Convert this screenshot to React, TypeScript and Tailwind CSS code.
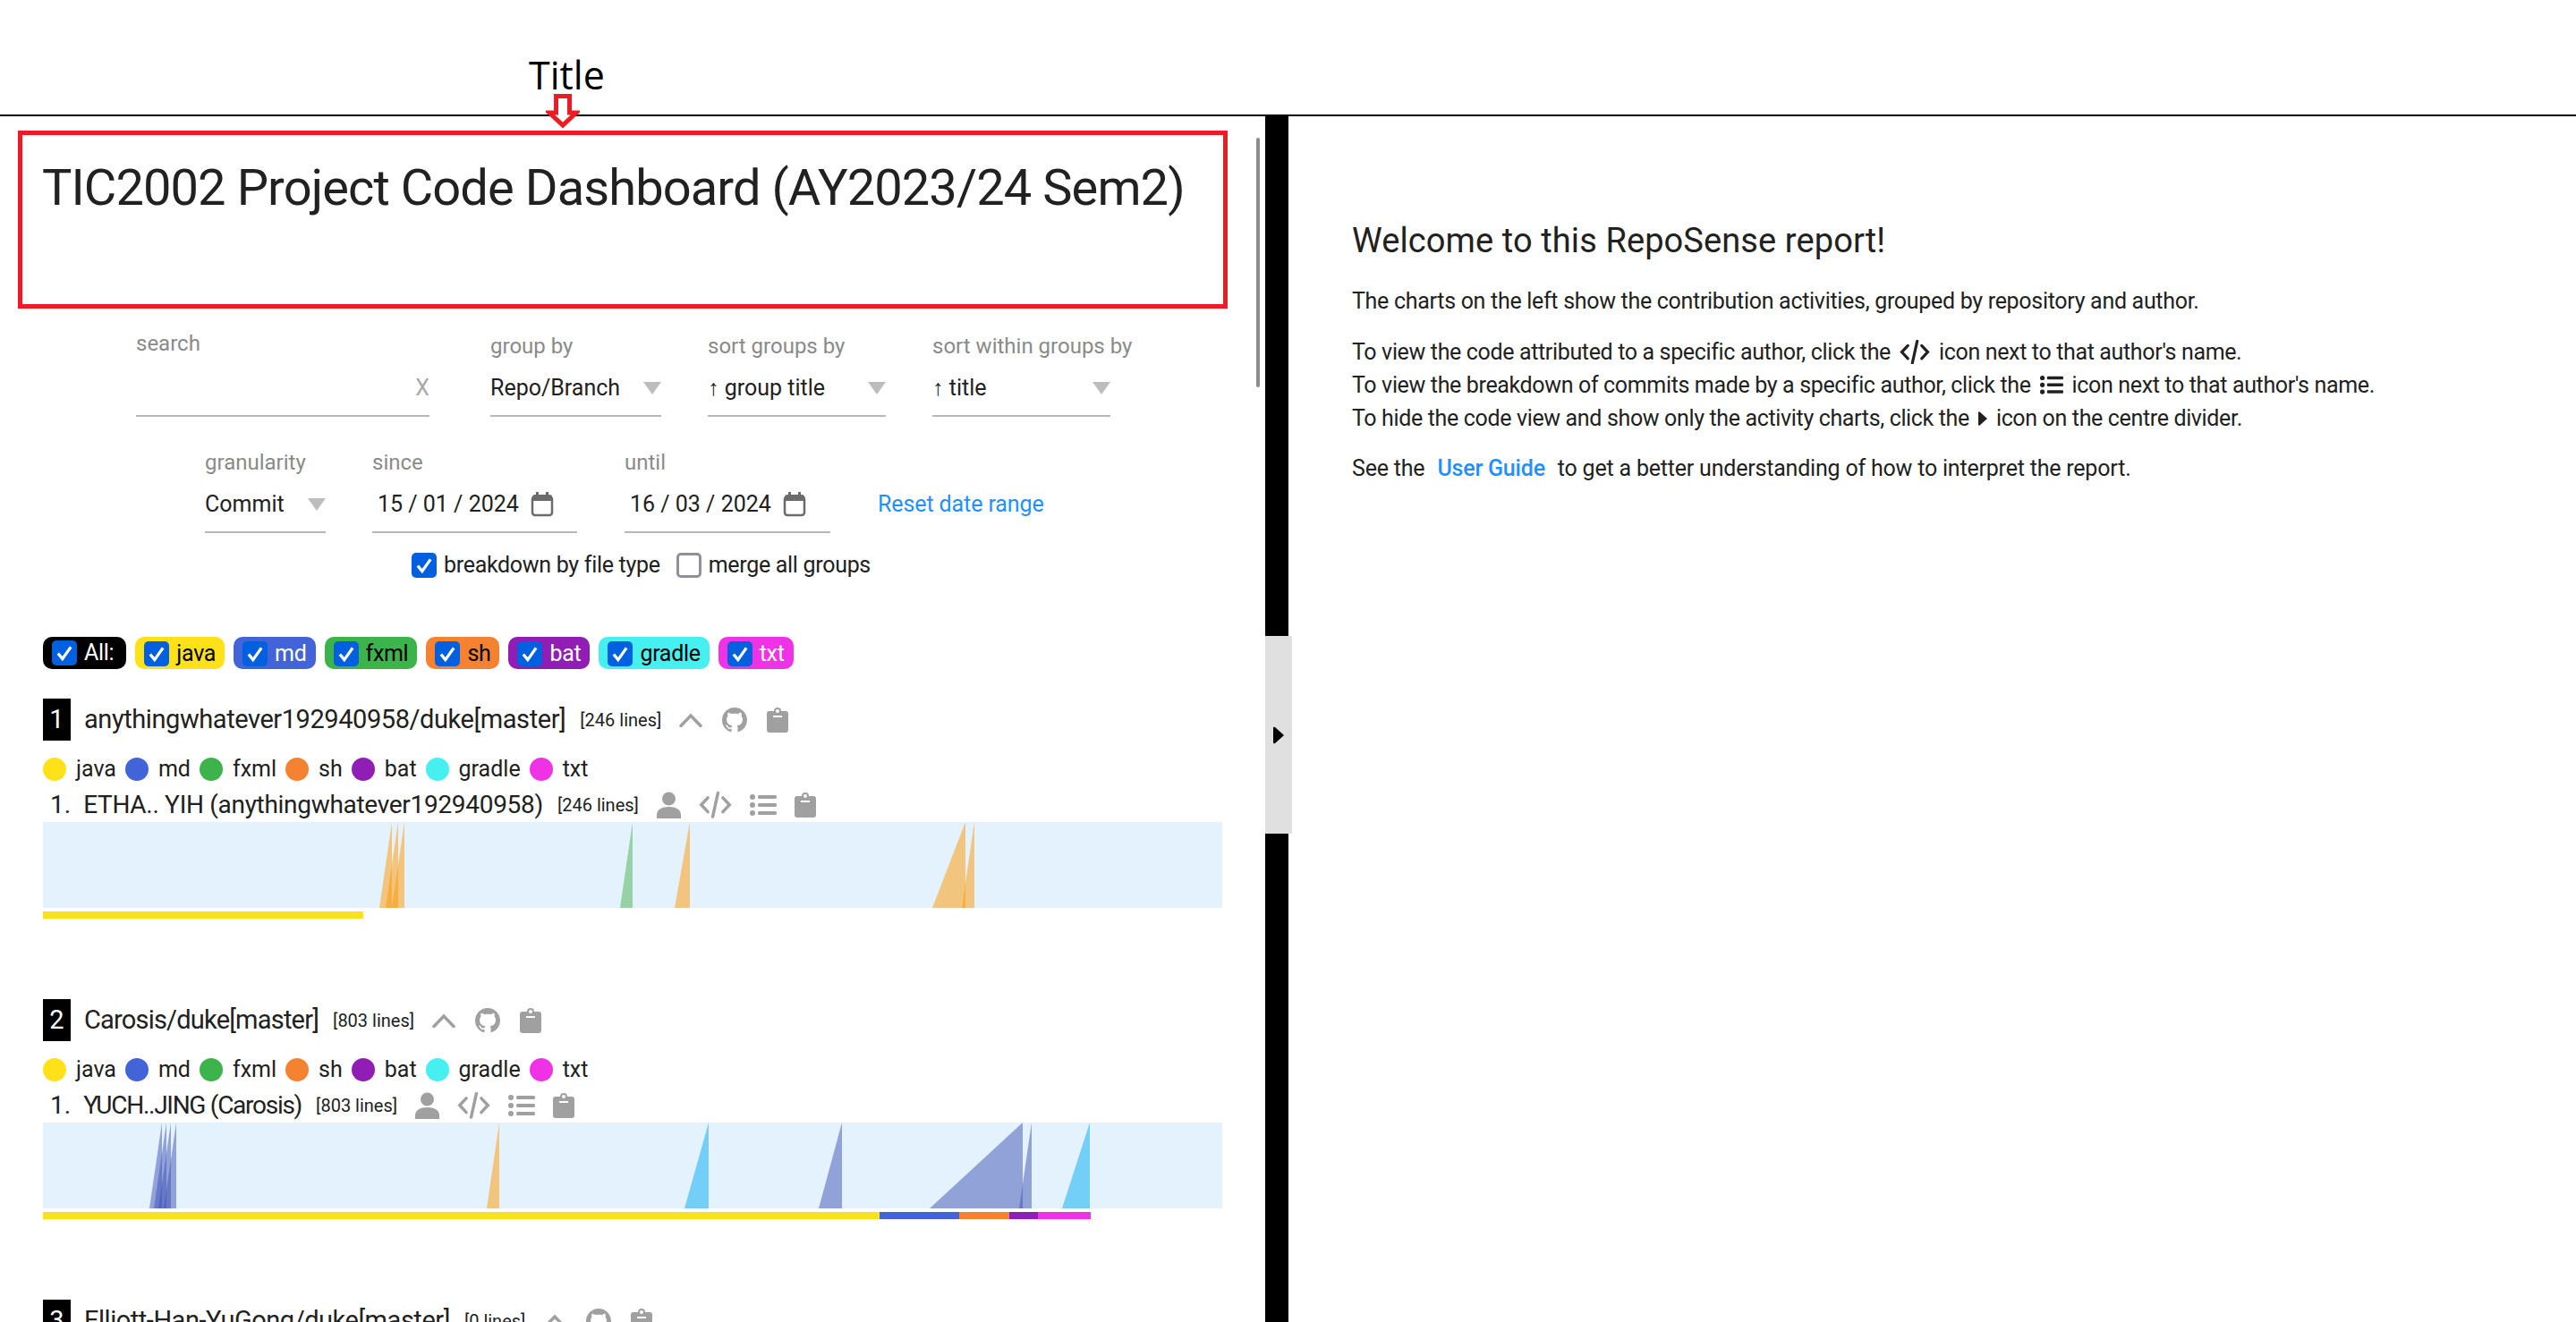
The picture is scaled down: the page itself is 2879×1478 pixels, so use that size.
import React from 'react';

const FONT = "font-['Roboto',sans-serif]";

const COLORS: Record<string, string> = {
  java: '#ffe119',
  md: '#4363d8',
  fxml: '#3cb44b',
  sh: '#f58231',
  bat: '#911eb4',
  gradle: '#46f0f0',
  txt: '#f032e6',
};

const TYPES = ['java', 'md', 'fxml', 'sh', 'bat', 'gradle', 'txt'];

const ORANGE = '#ff9800';
const GREEN = '#4caf50';
const BLUE = '#3f51b5';
const SKY = '#03a9f4';

type Ramp = [number, number, string];

const repos = [
  {
    rank: 1,
    title: 'anythingwhatever192940958/duke[master]',
    titleClass: 'tracking-[-0.43px]',
    lines: '[246 lines]',
    author: 'ETHA.. YIH (anythingwhatever192940958)',
    authorClass: 'tracking-[-0.3px]',
    ramps: [
      [424, 438, ORANGE],
      [431, 445, ORANGE],
      [438, 452, ORANGE],
      [693, 707, GREEN],
      [754, 771, ORANGE],
      [1042, 1079, ORANGE],
      [1075, 1089, ORANGE],
    ] as Ramp[],
    bar: [['java', 358]] as [string, number][],
  },
  {
    rank: 2,
    title: 'Carosis/duke[master]',
    titleClass: 'tracking-[-0.8px]',
    lines: '[803 lines]',
    author: 'YUCH..JING (Carosis)',
    authorClass: 'tracking-[-1.27px]',
    ramps: [
      [167, 181, BLUE],
      [172, 186, BLUE],
      [177, 191, BLUE],
      [183, 197, BLUE],
      [544, 558, ORANGE],
      [765, 792, SKY],
      [915, 941, BLUE],
      [1039, 1143, BLUE],
      [1139, 1153, BLUE],
      [1187, 1218, SKY],
    ] as Ramp[],
    bar: [
      ['java', 935],
      ['md', 89],
      ['sh', 56],
      ['bat', 32],
      ['txt', 59],
    ] as [string, number][],
  },
];

const Check = ({ checked = true }: { checked?: boolean }) =>
  checked ? (
    <span className="flex h-[28px] w-[28px] shrink-0 items-center justify-center rounded-[5px] bg-[#0060df]">
      <svg width="22" height="22" viewBox="0 0 20 20" fill="none">
        <path d="M3.5 10.5 L8 16 L16.5 4" stroke="#fff" strokeWidth="3" />
      </svg>
    </span>
  ) : (
    <span className="h-[28px] w-[28px] shrink-0 rounded-[5px] border-[3px] border-[#8f8f9d] bg-white" />
  );

const Caret = () => (
  <svg width="20" height="14" viewBox="0 0 20 14" className="shrink-0">
    <path d="M0 0 H20 L10 14 Z" fill="#bdbdbd" />
  </svg>
);

const Calendar = () => (
  <svg width="26" height="28" viewBox="0 0 26 28" fill="none" className="shrink-0">
    <rect x="2" y="5" width="22" height="21" rx="3" stroke="#6b6b6b" strokeWidth="2.5" />
    <path d="M2 6 a3 3 0 0 1 3 -3 H21 a3 3 0 0 1 3 3 V10 H2 Z" fill="#6b6b6b" />
    <rect x="6" y="0" width="3" height="6" fill="#6b6b6b" />
    <rect x="17" y="0" width="3" height="6" fill="#6b6b6b" />
  </svg>
);

const Chevron = () => (
  <svg width="26" height="16" viewBox="0 0 26 16" fill="none">
    <path d="M2 14.5 L13 3 L24 14.5" stroke="#a0a0a0" strokeWidth="3.5" strokeLinecap="round" />
  </svg>
);

const Github = () => (
  <svg width="28" height="28" viewBox="0 0 16 16" fill="#a0a0a0">
    <path d="M8 0C3.58 0 0 3.58 0 8c0 3.54 2.29 6.53 5.47 7.59.4.07.55-.17.55-.38 0-.19-.01-.82-.01-1.49-2.01.37-2.53-.49-2.69-.94-.09-.23-.48-.94-.82-1.13-.28-.15-.68-.52-.01-.53.63-.01 1.08.58 1.23.82.72 1.21 1.87.87 2.33.66.07-.52.28-.87.51-1.07-1.78-.2-3.64-.89-3.64-3.95 0-.87.31-1.59.82-2.15-.08-.2-.36-1.02.08-2.12 0 0 .67-.21 2.2.82.64-.18 1.32-.27 2-.27s1.36.09 2 .27c1.53-1.04 2.2-.82 2.2-.82.44 1.1.16 1.92.08 2.12.51.56.82 1.27.82 2.15 0 3.07-1.87 3.75-3.65 3.95.29.25.54.73.54 1.48 0 1.07-.01 1.93-.01 2.2 0 .21.15.46.55.38A8.01 8.01 0 0 0 16 8c0-4.42-3.58-8-8-8z" />
  </svg>
);

const Clipboard = () => (
  <svg width="24" height="28" viewBox="0 0 24 28" fill="#a0a0a0">
    <path
      fillRule="evenodd"
      d="M3 4 H8 A4 4 0 0 1 16 4 H21 A3 3 0 0 1 24 7 V25 A3 3 0 0 1 21 28 H3 A3 3 0 0 1 0 25 V7 A3 3 0 0 1 3 4 Z M10 4 a2 2 0 1 0 4 0 a2 2 0 1 0 -4 0 Z M7 9 V11 H17 V9 Z"
    />
  </svg>
);

const Person = () => (
  <svg width="27" height="30" viewBox="0 0 27 30" fill="#a0a0a0">
    <circle cx="13.5" cy="8" r="7.5" />
    <path d="M0 30 V26 C0 20 6 17 13.5 17 S27 20 27 26 V30 Z" />
  </svg>
);

const Code = ({ color = '#a0a0a0', size = 37 }: { color?: string; size?: number }) => (
  <svg width={size} height={size * 0.8} viewBox="0 0 37 30" fill="none" stroke={color} strokeWidth="3.5" strokeLinecap="round">
    <path d="M10 7 L2.5 15 L10 23" />
    <path d="M27 7 L34.5 15 L27 23" />
    <path d="M21.5 1.5 L15.5 28.5" />
  </svg>
);

const ListIcon = ({ color = '#a0a0a0', size = 30 }: { color?: string; size?: number }) => (
  <svg width={size} height={size * 0.87} viewBox="0 0 30 26" fill={color}>
    <circle cx="3" cy="4" r="3" />
    <circle cx="3" cy="13" r="3" />
    <circle cx="3" cy="22" r="3" />
    <rect x="9" y="2" width="21" height="4" rx="1.5" />
    <rect x="9" y="11" width="21" height="4" rx="1.5" />
    <rect x="9" y="20" width="21" height="4" rx="1.5" />
  </svg>
);

const Field = ({ label, width, gap, children }: { label: string; width: string; gap: string; children: React.ReactNode }) => (
  <div className={`${width} ${gap} shrink-0`}>
    <div className="h-[30px] whitespace-nowrap text-[24px] leading-[30px] text-[#8a8a8a]">{label}</div>
    <div className="flex h-[64px] items-center justify-between border-b-2 border-[#b8b8b8] pt-[2px] text-[25px] text-[#212121]">
      {children}
    </div>
  </div>
);

const DateValue = ({ value }: { value: string }) => (
  <span className="flex items-center gap-[13px] pl-[6px]">
    {value}
    <Calendar />
  </span>
);

const Legend = () => (
  <div className="mt-[19px] flex h-[26px] items-center">
    {TYPES.map((t) => (
      <div key={t} className="mr-[10px] flex items-center gap-[11px]">
        <span className="h-[26px] w-[26px] rounded-full" style={{ background: COLORS[t] }} />
        <span className="text-[25px] text-[#212121]">{t}</span>
      </div>
    ))}
  </div>
);

const RepoHeader = ({ rank, title, titleClass, lines }: { rank: number; title: string; titleClass: string; lines: string }) => (
  <div className="flex h-[47px] items-center">
    <span className="flex h-[47px] w-[31px] items-center justify-center bg-black text-[29px] text-white">{rank}</span>
    <span className={`ml-[15px] text-[29px] text-[#212121] ${titleClass}`}>{title}</span>
    <span className="ml-[16px] text-[20px] text-[#212121]">{lines}</span>
    <span className="ml-[20px] flex items-center gap-[22px]">
      <Chevron />
      <Github />
      <Clipboard />
    </span>
  </div>
);

const Repo = ({ repo }: { repo: (typeof repos)[number] }) => (
  <section className="mb-[90px]">
    <RepoHeader rank={repo.rank} title={repo.title} titleClass={repo.titleClass} lines={repo.lines} />
    <Legend />
    <div className="flex h-[46px] items-center pl-[8px] pt-[8px]">
      <span className="text-[28px] text-[#212121]">1.</span>
      <span className={`ml-[14px] text-[28px] text-[#212121] ${repo.authorClass}`}>{repo.author}</span>
      <span className="ml-[16px] text-[20px] text-[#212121]">{repo.lines}</span>
      <span className="ml-[20px] flex items-center gap-[20px]">
        <Person />
        <Code />
        <ListIcon />
        <Clipboard />
      </span>
    </div>
    <div className="h-[96px] w-[1318px] bg-[#e3f2fd]">
      <svg width="1318" height="96" viewBox="48 0 1318 96">
        {repo.ramps.map(([a, b, c], i) => (
          <polygon key={i} points={`${a},96 ${b},0 ${b},96`} fill={c} fillOpacity="0.5" />
        ))}
      </svg>
    </div>
    <div className="mt-[4px] flex h-[8px]">
      {repo.bar.map(([t, w]) => (
        <span key={t} className="h-full" style={{ width: w, background: COLORS[t] }} />
      ))}
    </div>
  </section>
);

export default function App() {
  return (
    <div className={`${FONT} flex h-[1478px] w-[2879px] flex-col overflow-hidden bg-white`}>
      <header className="relative h-[130px] shrink-0 border-b-2 border-black">
        <div className="pl-[591px] pt-[59px] font-['Open_Sans',sans-serif] text-[43px] leading-[50px] text-black">Title</div>
        <svg width="38" height="40" viewBox="0 0 38 40" fill="none" className="absolute left-[610px] top-[105px]">
          <path d="M11.5 2.5 H26.5 V21 H34 L19 35 L4 21 H11.5 Z" fill="#fff" stroke="#ed1c24" strokeWidth="5" />
        </svg>
      </header>
      <div className="flex min-h-0 flex-1">
        <main className="relative w-[1414px] shrink-0 overflow-hidden">
          <div className="ml-[20px] mt-[16px] h-[199px] w-[1352px] whitespace-nowrap border-[5px] border-[#ed1c24] pl-[22px] pt-[24px] text-[56px] leading-[70px] tracking-[-0.9px] text-[#212121]">
            TIC2002 Project Code Dashboard (AY2023/24 Sem2)
          </div>

          <div className="mt-[27px] flex pl-[152px]">
            <div className="w-[328px] shrink-0">
              <div className="-mt-[3px] mb-[3px] h-[30px] text-[24px] leading-[30px] text-[#8a8a8a]">search</div>
              <div className="flex h-[64px] items-center justify-end border-b-2 border-[#b8b8b8] pt-[2px] text-[25px] text-[#a8a8a8]">X</div>
            </div>
            <Field label="group by" width="w-[191px]" gap="ml-[68px]">
              Repo/Branch
              <Caret />
            </Field>
            <Field label="sort groups by" width="w-[199px]" gap="ml-[52px]">
              ↑ group title
              <Caret />
            </Field>
            <Field label="sort within groups by" width="w-[199px]" gap="ml-[52px]">
              ↑ title
              <Caret />
            </Field>
          </div>

          <div className="mt-[36px] flex items-start pl-[229px]">
            <Field label="granularity" width="w-[135px]" gap="ml-0">
              Commit
              <Caret />
            </Field>
            <Field label="since" width="w-[229px]" gap="ml-[52px]">
              <DateValue value="15 / 01 / 2024" />
            </Field>
            <Field label="until" width="w-[230px]" gap="ml-[53px]">
              <DateValue value="16 / 03 / 2024" />
            </Field>
            <span className="ml-[53px] mt-[43px] text-[25px] leading-[38px] tracking-[-0.1px] text-[#1e90ff]">Reset date range</span>
          </div>

          <div className="mt-[22px] flex h-[28px] items-center pl-[460px] text-[25px] tracking-[-0.3px] text-[#212121]">
            <Check />
            <span className="ml-[8px]">breakdown by file type</span>
            <div className="ml-[18px] flex">
              <Check checked={false} />
            </div>
            <span className="ml-[8px]">merge all groups</span>
          </div>

          <div className="mt-[66px] flex gap-[10px] pl-[48px]">
            <label className="flex h-[36px] items-center gap-[8px] rounded-[10px] bg-black pl-[10px] pr-[14px] text-[25px] tracking-[-0.3px] text-white">
              <Check />
              All:
            </label>
            {TYPES.map((t) => (
              <label
                key={t}
                className="flex h-[36px] items-center gap-[8px] rounded-[10px] px-[10px] pt-[1px] text-[25px] tracking-[-0.3px]"
                style={{
                  background: COLORS[t],
                  color: ['md', 'bat', 'txt'].includes(t) ? '#fff' : '#000',
                }}
              >
                <Check />
                {t}
              </label>
            ))}
          </div>

          <div className="mt-[33px] pl-[48px]">
            {repos.map((r) => (
              <Repo key={r.rank} repo={r} />
            ))}
            <RepoHeader rank={3} title="Elliott-Han-YuGong/duke[master]" titleClass="tracking-[-0.47px]" lines="[0 lines]" />
          </div>

          <div className="absolute left-[1404px] top-[24px] h-[279px] w-[4px] rounded-full bg-[#8c8c8c]" />
        </main>

        <div className="relative w-[26px] shrink-0 bg-black">
          <div className="absolute left-0 top-[581px] flex h-[221px] w-[30px] items-center justify-center bg-[#e0e0e0]">
            <svg width="12" height="20" viewBox="0 0 12 20">
              <path d="M0 2 Q0 0 2 1 L12 10 L2 19 Q0 20 0 18 Z" fill="#000" />
            </svg>
          </div>
        </div>

        <aside className="flex-1 pl-[71px] pt-[116px] text-[25px] leading-[37px] tracking-[-0.35px] text-[#212121]">
          <h1 className="text-[38px] leading-[46px] tracking-[0.1px]">Welcome to this RepoSense report!</h1>
          <p className="mt-[26px] tracking-[-0.3px]">The charts on the left show the contribution activities, grouped by repository and author.</p>
          <p className="mt-[20px] flex items-center gap-[10px]">
            To view the code attributed to a specific author, click the
            <Code color="#212121" size={34} />
            icon next to that author's name.
          </p>
          <p className="flex items-center gap-[10px]">
            To view the breakdown of commits made by a specific author, click the
            <ListIcon color="#212121" size={26} />
            icon next to that author's name.
          </p>
          <p className="flex items-center gap-[10px]">
            To hide the code view and show only the activity charts, click the
            <svg width="10" height="20" viewBox="0 0 12 20">
              <path d="M0 2 Q0 0 2 1 L12 10 L2 19 Q0 20 0 18 Z" fill="#212121" />
            </svg>
            icon on the centre divider.
          </p>
          <p className="mt-[19px] tracking-[-0.2px]">
            See the <span className="mx-[8px] font-medium text-[#1e90ff]">User Guide</span> to get a better understanding of how to interpret the report.
          </p>
        </aside>
      </div>
    </div>
  );
}
